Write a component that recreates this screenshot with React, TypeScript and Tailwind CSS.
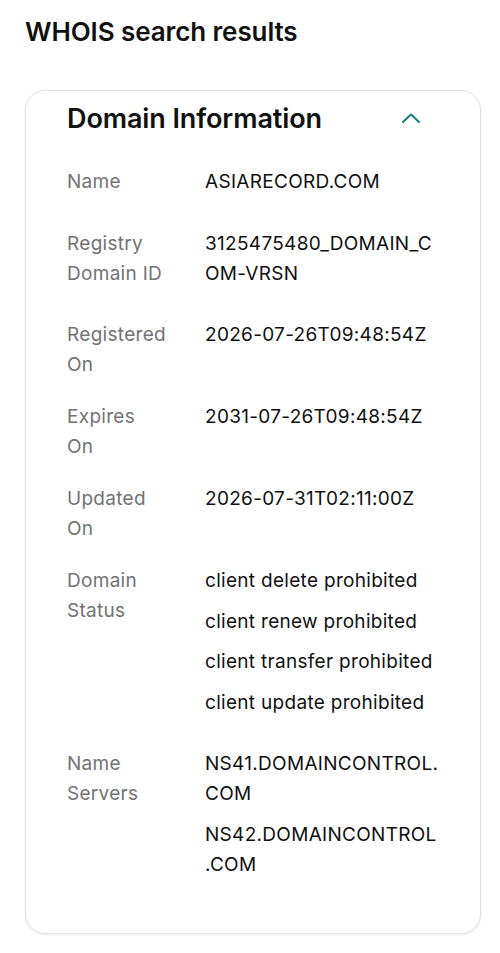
const ROWS: { label: string; values: string[] }[] = [
  { label: "Name", values: ["ASIARECORD.COM"] },
  { label: "Registry Domain ID", values: ["3125475480_DOMAIN_COM-VRSN"] },
  { label: "Registered On", values: ["2026-07-26T09:48:54Z"] },
  { label: "Expires On", values: ["2031-07-26T09:48:54Z"] },
  { label: "Updated On", values: ["2026-07-31T02:11:00Z"] },
  {
    label: "Domain Status",
    values: [
      "client delete prohibited",
      "client renew prohibited",
      "client transfer prohibited",
      "client update prohibited",
    ],
  },
  {
    label: "Name Servers",
    values: ["NS41.DOMAINCONTROL.COM", "NS42.DOMAINCONTROL.COM"],
  },
];

function InfoRow({ label, values }: { label: string; values: string[] }) {
  return (
    <div className="flex pb-[21px]">
      <div className="w-[97px] shrink-0 pb-[1px] text-[#737373]">{label}</div>
      <div className="ml-[41px] flex w-[236px] flex-col text-[#111111] [overflow-wrap:anywhere]">
        {values.map((v) => (
          <div key={v} className="pb-[10.5px]">
            {v}
          </div>
        ))}
      </div>
    </div>
  );
}

export default function App() {
  return (
    <div
      className="min-h-[953px] bg-white px-[25px] pt-[14px]"
      style={{ fontFamily: "Inter, 'Noto Sans', sans-serif" }}
    >
      <h1 className="text-[26px] leading-[36px] font-semibold tracking-[-0.1px] text-[#111111]">
        WHOIS search results
      </h1>
      <div className="mt-[40px] w-[456px] rounded-[20px] border border-[#e0e0e0] pb-[22px] shadow-[0_1px_2px_rgba(0,0,0,0.08)]">
        <div className="flex items-center justify-between pt-[10px] pr-[60px] pl-[41px]">
          <h2 className="text-[27px] leading-[36px] font-semibold tracking-[-0.1px] text-[#111111]">
            Domain Information
          </h2>
          <svg width="18" height="10" viewBox="0 0 18 10" fill="none" className="mt-[-2px]">
            <path d="M1 9 L9 1.5 L17 9" stroke="#1b7b83" strokeWidth="2" strokeLinecap="round" strokeLinejoin="round" />
          </svg>
        </div>
        <div className="mt-[30px] pl-[41px] text-[19px] leading-[30px] tracking-[0.3px]">
          {ROWS.map((r) => (
            <InfoRow key={r.label} {...r} />
          ))}
        </div>
      </div>
    </div>
  );
}
